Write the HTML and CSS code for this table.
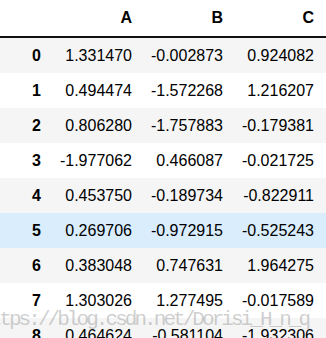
FILE: index.html
```html
<!DOCTYPE html>
<html lang="en">
<head>
  <meta charset="UTF-8" />
  <title>DataFrame</title>
  <link rel="stylesheet" href="styles.css">
</head>
<body>
  <div class="output">
    <table class="dataframe">
      <thead>
        <tr>
          <th class="idx"></th>
          <th>A</th>
          <th>B</th>
          <th>C</th>
        </tr>
      </thead>
      <tbody>
        <tr><th>0</th><td>1.331470</td><td>-0.002873</td><td>0.924082</td></tr>
        <tr><th>1</th><td>0.494474</td><td>-1.572268</td><td>1.216207</td></tr>
        <tr><th>2</th><td>0.806280</td><td>-1.757883</td><td>-0.179381</td></tr>
        <tr><th>3</th><td>-1.977062</td><td>0.466087</td><td>-0.021725</td></tr>
        <tr><th>4</th><td>0.453750</td><td>-0.189734</td><td>-0.822911</td></tr>
        <tr class="hover"><th>5</th><td>0.269706</td><td>-0.972915</td><td>-0.525243</td></tr>
        <tr><th>6</th><td>0.383048</td><td>0.747631</td><td>1.964275</td></tr>
        <tr><th>7</th><td>1.303026</td><td>1.277495</td><td>-0.017589</td></tr>
        <tr><th>8</th><td>0.464624</td><td>-0.581104</td><td>-1.932306</td></tr>
      </tbody>
    </table>
    <!-- blog watermark -->
    <div class="watermark">https://blog.csdn.net/Dorisi_H_n_q</div>
  </div>
</body>
</html>
```

FILE: styles.css
```css
* { box-sizing: border-box; }
body {
  margin: 0;
  background: #fff;
  color: #000;
  font-family: "Liberation Sans", Arial, sans-serif;
  font-size: 16px;
  overflow: hidden;
}
.output {
  position: relative;
}
.dataframe {
  width: 100%;
  table-layout: fixed;
  border-collapse: separate;
  border-spacing: 0;
}
.dataframe th,
.dataframe td {
  text-align: right;
  vertical-align: middle;
  padding: 0 9px 0 0;
  line-height: normal;
  white-space: nowrap;
}
.dataframe th:last-child,
.dataframe td:last-child { padding-right: 12px; }
.dataframe thead th {
  height: 38px;
  font-weight: bold;
  border-bottom: 2px solid #111;
}
.dataframe thead th.idx { width: 50px; }
.dataframe thead th:nth-child(2),
.dataframe thead th:nth-child(3) { width: 91px; }
.dataframe tbody th { font-weight: bold; }
.dataframe tbody td,
.dataframe tbody th { height: 35px; }
.dataframe tbody tr:nth-child(odd) { background: #f5f5f5; }
.dataframe tbody tr.hover { background: #d9edfd; }

.watermark {
  position: absolute;
  left: -20px;
  top: 309px;
  font-family: "Liberation Mono", "Courier New", monospace;
  font-size: 21px;
  letter-spacing: -2.95px;
  line-height: 1;
  color: rgba(140, 140, 140, 0.42);
  white-space: nowrap;
}
```
